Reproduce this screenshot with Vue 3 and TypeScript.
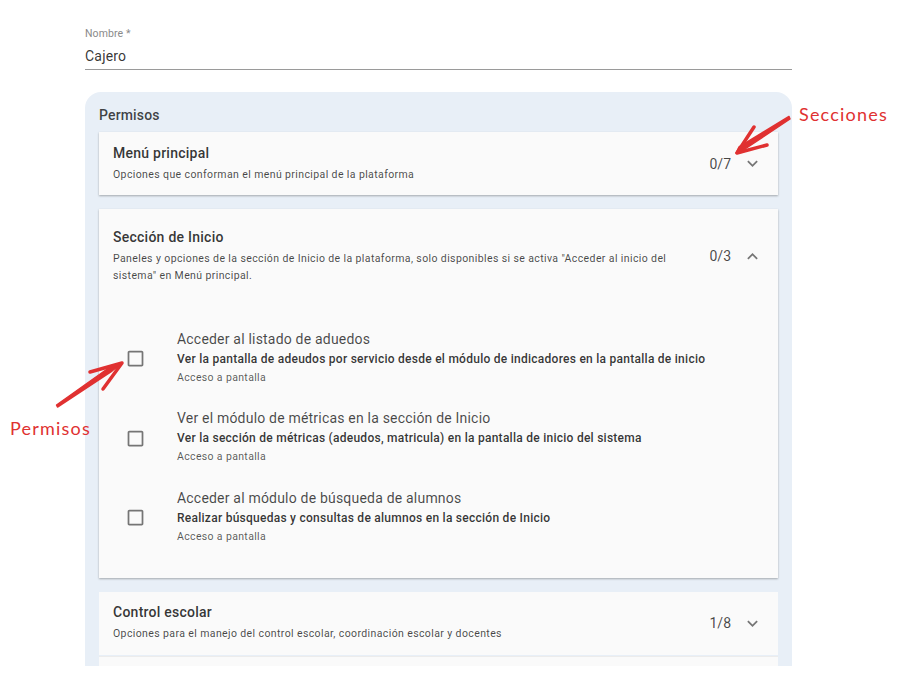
<template>
  <div class="page">
    <div class="field">
      <label class="field-label">Nombre *</label>
      <div class="field-value">Cajero</div>
    </div>

    <div class="panel">
      <h2 class="panel-title">Permisos</h2>

      <section v-for="s in sections" :key="s.title" class="card" :class="{ joined: s.joined }">
        <header class="card-head" :class="{ open: s.open }">
          <div class="card-text">
            <h3>{{ s.title }}</h3>
            <p>{{ s.desc }}</p>
          </div>
          <span class="count">{{ s.count }}</span>
          <svg class="chevron" viewBox="0 0 24 24" width="21" height="21">
            <path :d="s.open ? 'M12 8l-6 6 1.41 1.41L12 10.83l4.59 4.58L18 14z' : 'M16.59 8.59 12 13.17 7.41 8.59 6 10l6 6 6-6z'" />
          </svg>
        </header>

        <div v-if="s.open" class="perms">
          <div v-for="p in perms" :key="p.name" class="perm">
            <svg class="check" viewBox="0 0 24 24" width="21" height="21">
              <path d="M19 5v14H5V5h14m0-2H5c-1.1 0-2 .9-2 2v14c0 1.1.9 2 2 2h14c1.1 0 2-.9 2-2V5c0-1.1-.9-2-2-2z" />
            </svg>
            <div class="perm-text">
              <div class="perm-name">{{ p.name }}</div>
              <div class="perm-desc">{{ p.desc }}</div>
              <div class="perm-type">Acceso a pantalla</div>
            </div>
          </div>
        </div>
      </section>
      <div class="card last"></div>
    </div>

    <!-- anotaciones en rojo sobre la captura -->
    <span class="note note-secciones">Secciones</span>
    <span class="note note-permisos">Permisos</span>
    <svg class="arrow arrow-secciones" viewBox="0 0 65 52" width="65" height="52">
      <path class="shaft" d="M59 8.5 L60 11 L12 43 L6 45 L9 39 Z" />
      <path d="M24 19 L7 45 L37 37" />
    </svg>
    <svg class="arrow arrow-permisos" viewBox="0 0 80 55" width="80" height="55">
      <path class="shaft" d="M6.5 47 L7.5 49 L62 13 L71 6 L60 9 Z" />
      <path d="M40 14 L72 5 L53 31" />
    </svg>
  </div>
</template>

<script setup lang="ts">
interface Section {
  title: string
  desc: string
  count: string
  open?: boolean
  joined?: boolean
}

const sections: Section[] = [
  {
    title: 'Menú principal',
    desc: 'Opciones que conforman el menú principal de la plataforma',
    count: '0/7',
  },
  {
    title: 'Sección de Inicio',
    desc: 'Paneles y opciones de la sección de Inicio de la plataforma, solo disponibles si se activa "Acceder al inicio del sistema" en Menú principal.',
    count: '0/3',
    open: true,
  },
  {
    title: 'Control escolar',
    desc: 'Opciones para el manejo del control escolar, coordinación escolar y docentes',
    count: '1/8',
    joined: true,
  },
]

const perms = [
  {
    name: 'Acceder al listado de aduedos',
    desc: 'Ver la pantalla de adeudos por servicio desde el módulo de indicadores en la pantalla de inicio',
  },
  {
    name: 'Ver el módulo de métricas en la sección de Inicio',
    desc: 'Ver la sección de métricas (adeudos, matricula) en la pantalla de inicio del sistema',
  },
  {
    name: 'Acceder al módulo de búsqueda de alumnos',
    desc: 'Realizar búsquedas y consultas de alumnos en la sección de Inicio',
  },
]
</script>

<style scoped>
.page {
  position: relative;
  width: 898px;
  height: 666px;
  overflow: hidden;
  padding: 27px 106px 0 85px;
  box-sizing: border-box;
  font-family: Roboto, "Liberation Sans", sans-serif;
  color: rgba(0, 0, 0, 0.8);
}

.field {
  border-bottom: 1px solid #9a9a9a;
  height: 43px;
  box-sizing: border-box;
}

.field-label {
  display: block;
  font-size: 10.5px;
  line-height: 13px;
  letter-spacing: 0.1px;
  color: #8a8a8a;
}

.field-value {
  margin-top: 6px;
  font-size: 14px;
  line-height: 20px;
  letter-spacing: 0.2px;
}

.panel {
  margin-top: 22px;
  padding: 14px 14px 0;
  background: #e8eff7;
  border-radius: 16px 16px 0 0;
  height: 574px;
  box-sizing: border-box;
}

.panel-title {
  margin: 0 0 8px;
  font-size: 14px;
  line-height: 18px;
  font-weight: 500;
  letter-spacing: 0.15px;
  color: rgba(0, 0, 0, 0.74);
}

.card {
  background: #fafafa;
  box-shadow: 0 1px 2px rgba(0, 0, 0, 0.3);
  margin-bottom: 14px;
}

.card.joined {
  margin-bottom: 0;
  box-shadow: none;
}

.card.last {
  height: 20px;
  margin: 1px 0 0;
  box-shadow: none;
  border-top: 1px solid #ececec;
}

.card-head {
  display: flex;
  align-items: center;
  height: 63px;
  padding: 0 14px;
  box-sizing: border-box;
}

.card-head.open {
  height: 94px;
}

.card-text {
  flex: 1;
  min-width: 0;
  padding-right: 28px;
}

.card-text h3 {
  margin: 0 0 5px;
  font-size: 14px;
  line-height: 16px;
  font-weight: 500;
  letter-spacing: 0.25px;
}

.card-text p {
  margin: 0;
  font-size: 10.5px;
  line-height: 17px;
  letter-spacing: 0.39px;
  color: rgba(0, 0, 0, 0.72);
}

.count {
  font-size: 14px;
  color: rgba(0, 0, 0, 0.72);
  margin-right: 11px;
}

.chevron {
  fill: #757575;
  margin-right: 1px;
}

.perms {
  padding: 16px 0 20px;
}

.perm {
  display: flex;
  align-items: center;
  height: 79.5px;
  padding-left: 26px;
  box-sizing: border-box;
}

.check {
  fill: #757575;
  flex-shrink: 0;
}

.perm-text {
  margin-left: 27px;
  padding: 0 0 2px 4px;
}

.perm-name {
  font-size: 14px;
  line-height: 20px;
  letter-spacing: 0.2px;
  color: rgba(0, 0, 0, 0.72);
}

.perm-desc {
  font-size: 12px;
  line-height: 20px;
  font-weight: 500;
  letter-spacing: 0.26px;
}

.perm-type {
  font-size: 10.5px;
  line-height: 18px;
  letter-spacing: 0.35px;
  color: rgba(0, 0, 0, 0.66);
}

.note {
  position: absolute;
  font-family: Lato, "Liberation Sans", sans-serif;
  color: #e03131;
  font-size: 18px;
  line-height: 22px;
  letter-spacing: 1.2px;
}

.note-secciones {
  left: 799px;
  top: 103px;
}

.note-permisos {
  left: 10px;
  top: 417px;
}

.arrow {
  position: absolute;
  fill: none;
  stroke: #e03131;
  stroke-width: 3.5;
  stroke-linecap: round;
  stroke-linejoin: round;
}

.arrow .shaft {
  fill: #e03131;
  stroke-width: 1.5;
}

.arrow-secciones {
  left: 730px;
  top: 108px;
}

.arrow-permisos {
  left: 50px;
  top: 358px;
}
</style>
